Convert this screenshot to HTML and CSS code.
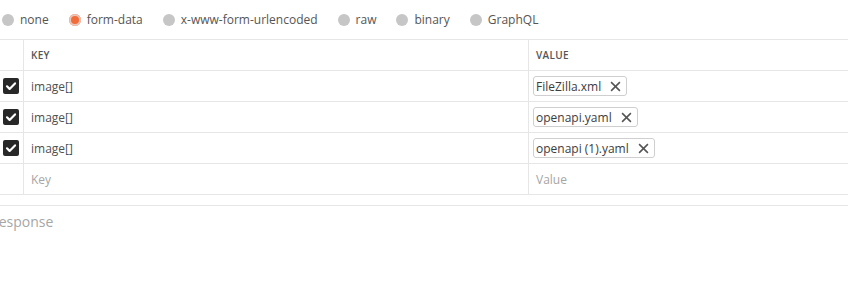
FILE: index.html
```html
<!DOCTYPE html>
<html lang="en">
<head>
  <meta charset="UTF-8">
  <title>Body</title>
  <link rel="stylesheet" href="styles.css">
</head>
<body>
  <!-- Body type selector -->
  <div class="body__types">
    <label class="body__type"><span class="body__radio"></span>none</label>
    <label class="body__type"><span class="body__radio body__radio--on"></span>form-data</label>
    <label class="body__type"><span class="body__radio"></span>x-www-form-urlencoded</label>
    <label class="body__type"><span class="body__radio"></span>raw</label>
    <label class="body__type"><span class="body__radio"></span>binary</label>
    <label class="body__type"><span class="body__radio"></span>GraphQL</label>
  </div>

  <!-- Form data table -->
  <div class="kv">
    <div class="kv__row kv__row--head">
      <div class="kv__cell kv__cell--check"></div>
      <div class="kv__cell">KEY</div>
      <div class="kv__cell">VALUE</div>
    </div>
    <div class="kv__row">
      <div class="kv__cell kv__cell--check"><span class="kv__checkbox"><svg viewBox="0 0 16 16"><path d="M4 8.3l2.6 2.6L12 5.4" /></svg></span></div>
      <div class="kv__cell">image[]</div>
      <div class="kv__cell"><span class="kv__file">FileZilla.xml<svg class="kv__remove" viewBox="0 0 10 10"><path d="M1 1l8 8M9 1l-8 8" /></svg></span></div>
    </div>
    <div class="kv__row">
      <div class="kv__cell kv__cell--check"><span class="kv__checkbox"><svg viewBox="0 0 16 16"><path d="M4 8.3l2.6 2.6L12 5.4" /></svg></span></div>
      <div class="kv__cell">image[]</div>
      <div class="kv__cell"><span class="kv__file">openapi.yaml<svg class="kv__remove" viewBox="0 0 10 10"><path d="M1 1l8 8M9 1l-8 8" /></svg></span></div>
    </div>
    <div class="kv__row">
      <div class="kv__cell kv__cell--check"><span class="kv__checkbox"><svg viewBox="0 0 16 16"><path d="M4 8.3l2.6 2.6L12 5.4" /></svg></span></div>
      <div class="kv__cell">image[]</div>
      <div class="kv__cell"><span class="kv__file">openapi (1).yaml<svg class="kv__remove" viewBox="0 0 10 10"><path d="M1 1l8 8M9 1l-8 8" /></svg></span></div>
    </div>
    <div class="kv__row">
      <div class="kv__cell kv__cell--check"></div>
      <div class="kv__cell kv__cell--placeholder">Key</div>
      <div class="kv__cell kv__cell--placeholder">Value</div>
    </div>
  </div>

  <!-- Response pane (scrolled a little to the left, as in the app) -->
  <div class="response">
    <span class="response__title">Response</span>
  </div>
</body>
</html>
```

FILE: styles.css
```css
:root {
  --line: #e6e6e6;
  --text: #505050;
  --muted: #a6a6a6;
  --accent: #f26b3a;
}
* { box-sizing: border-box; margin: 0; padding: 0; }
body {
  font-family: "Open Sans", "Noto Sans", sans-serif;
  font-size: 12px;
  color: var(--text);
  background: #fff;
  width: 848px;
  overflow: hidden;
}
.body__types {
  display: flex;
  align-items: center;
  gap: 20px;
  height: 39px;
  padding-left: 2px;
}
.body__type {
  display: flex;
  align-items: center;
  gap: 6px;
  color: #555;
}
.body__radio {
  width: 12px;
  height: 12px;
  border-radius: 50%;
  background: #c6c6c6;
}
.body__radio--on {
  background: var(--accent);
  box-shadow: inset 0 0 0 2px #e9c6b8;
}
.kv {
  border-top: 1px solid var(--line);
  border-bottom: 1px solid var(--line);
}
.kv__row {
  display: grid;
  grid-template-columns: 23px 505px 1fr;
  height: 31px;
  border-bottom: 1px solid var(--line);
}
.kv__row:last-child { border-bottom: none; height: 30px; }
.kv__cell {
  display: flex;
  align-items: center;
  padding-left: 7px;
  border-left: 1px solid var(--line);
}
.kv__cell--check {
  border-left: none;
  padding-left: 3px;
}
.kv__row--head .kv__cell {
  font-size: 10px;
  font-weight: 600;
  color: #555;
  letter-spacing: 0.3px;
}
.kv__cell--placeholder { color: var(--muted); }
.kv__checkbox {
  width: 16px;
  height: 16px;
  border-radius: 2px;
  background: #282828;
  display: flex;
}
.kv__checkbox svg {
  width: 16px;
  height: 16px;
  fill: none;
  stroke: #fff;
  stroke-width: 2.2;
  stroke-linecap: round;
  stroke-linejoin: round;
}
.kv__file {
  display: flex;
  align-items: center;
  height: 20px;
  padding: 0 5px 0 2px;
  margin-left: -3px;
  border: 1px solid #cfcfcf;
  border-radius: 3px;
  color: #3c3c3c;
}
.kv__remove {
  width: 11px;
  height: 11px;
  margin-left: 9px;
  fill: none;
  stroke: #555;
  stroke-width: 1.4;
}
.response {
  margin-top: 10px;
  border-top: 1px solid var(--line);
  padding-top: 6px;
  height: 80px;
}
.response__title {
  display: block;
  margin-left: -10px;
  font-size: 14px;
  color: var(--muted);
}
```
